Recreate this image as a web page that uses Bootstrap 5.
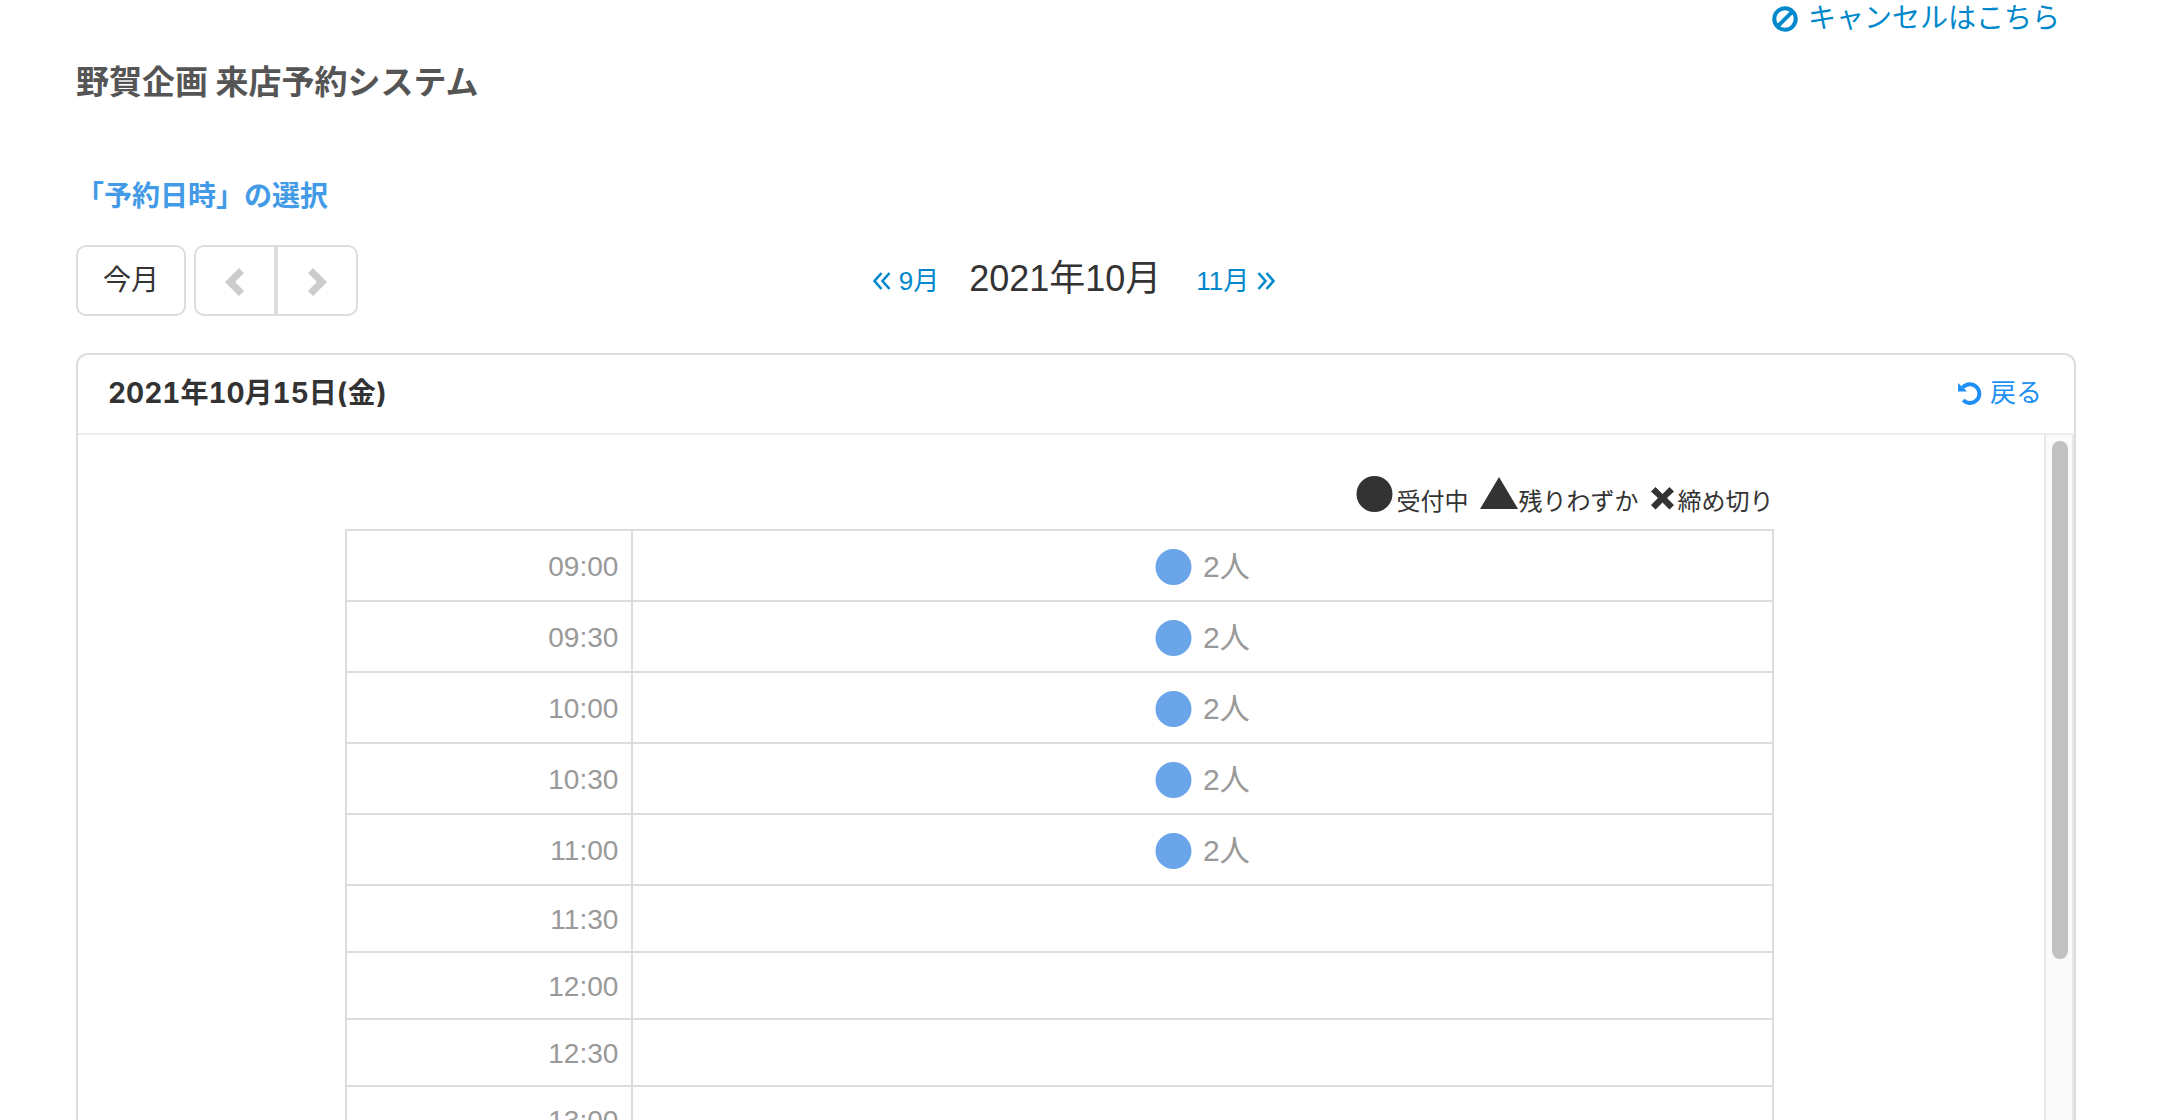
<!DOCTYPE html>
<html lang="ja">
<head>
<meta charset="utf-8">
<meta name="viewport" content="width=device-width, initial-scale=1">
<title>野賀企画 来店予約システム</title>
<link href="https://cdn.jsdelivr.net/npm/bootstrap@5.3.0/dist/css/bootstrap.min.css" rel="stylesheet">
<style>
  body { font-family: "Liberation Sans", "Noto Sans CJK JP", sans-serif; font-size: 28px; line-height: 36px; color: #333; }
  a { text-decoration: none; color: #08c; }
  svg { fill: currentColor; flex-shrink: 0; }
  .page { padding: 1px 84px 0 76px; }
  .page > *, .day-head { flex-shrink: 0; }
  .cancel-link { padding-right: 16px; gap: 10px; }
  .site-title { font-family: "Noto Sans CJK JP", sans-serif; font-size: 33px; line-height: 48px; font-weight: 700; color: #555; margin: 19px 0 0; }
  .step-title { font-size: 28px; line-height: 40px; font-weight: 700; color: #439ae6; margin: 73px 0 28px; }
  .toolbar-side { flex: 1 1 0; }
  .cal-btn { --bs-btn-font-size: 28px; --bs-btn-line-height: 36px; --bs-btn-color: #333; --bs-btn-border-color: #ddd; --bs-btn-border-width: 2px; --bs-btn-border-radius: 10px; --bs-btn-padding-x: 25px; --bs-btn-padding-y: 0px; height: 71px; border-width: 2px; }
  .cal-arrow { width: 82px; color: #ccc; }
  .cal-arrow + .cal-arrow { margin-left: 0 !important; }
  .month-link { font-size: 26px; }
  .month-name { font-size: 36px; line-height: 48px; font-weight: 400; margin: 0 35px 4px 30px; }
  .day-panel { border: 2px solid #ddd; border-bottom: 0; border-radius: 12px 12px 0 0; margin-top: 37px; min-height: 0; flex: 1 1 0; }
  .day-head { height: 80px; border-bottom: 2px solid #eee; padding: 0 32px 3px 30px; }
  .day-title { font-family: Inter, "Noto Sans CJK JP", sans-serif; font-variant-numeric: tabular-nums; font-size: 28px; line-height: 36px; font-weight: 700; margin: 0; }
  .back-link { font-size: 26px; color: #2190f5; }
  .slot-area { padding: 41px 4px 0 0; min-width: 0; }
  .slot-box { width: 1429px; max-width: 100%; }
  .legend-row { font-size: 24px; line-height: 36px; height: 53px; gap: 11px; }
  .slot-table { width: 100%; border-collapse: collapse; color: #999; }
  .slot-table th, .slot-table td { border: 2px solid #ddd; padding: 3px 13px 0; height: 67px; }
  .slot-table th { width: 20.1%; font-weight: 400; text-align: right; }
  .slot-table .open-row > * { height: 71px; }
  .slot-link { font-size: 30px; color: #999; gap: 11px; }
  .slot-link svg { color: #6aa5ea; }
  .scroll-track { width: 30px; background: #fafafa; border: solid #e8e8e8; border-width: 0 2px; padding: 6px; }
  .scroll-thumb { width: 16px; height: 77%; border-radius: 8px; background: #c1c1c1; }
</style>
</head>
<body>
<svg class="d-none" xmlns="http://www.w3.org/2000/svg">
  <symbol id="i-disc" viewBox="0 0 36 36"><circle cx="18" cy="18" r="18"/></symbol>
</svg>
<div class="page vh-100 overflow-hidden d-flex flex-column">
  <div class="d-flex justify-content-end">
    <a class="cancel-link d-flex align-items-center" href="#"><svg width="26" height="26" viewBox="0 0 26 26"><circle cx="13" cy="13" r="10.7" fill="none" stroke="currentColor" stroke-width="4"/><path d="M5.6 20.4 20.4 5.6" stroke="currentColor" stroke-width="4"/></svg>キャンセルはこちら</a>
  </div>
  <h1 class="site-title">野賀企画 来店予約システム</h1>
  <h2 class="step-title">「予約日時」の選択</h2>

  <div class="d-flex align-items-center">
    <div class="toolbar-side d-flex gap-2">
      <button type="button" class="btn cal-btn">今月</button>
      <div class="btn-group">
        <button type="button" class="btn cal-btn cal-arrow p-0" aria-label="前へ"><svg width="20" height="28" viewBox="0 0 20 28"><path d="M14 0 19 5 10.200 14 19 23 14 28 0 14z"/></svg></button>
        <button type="button" class="btn cal-btn cal-arrow p-0" aria-label="次へ"><svg width="20" height="28" viewBox="0 0 20 28"><path d="M6 0 1 5 9.800 14 1 23 6 28 20 14z"/></svg></button>
      </div>
    </div>
    <div class="d-flex align-items-center">
      <a class="month-link d-flex align-items-center" href="#"><svg class="me-2" width="18" height="18" viewBox="0 0 18 18"><path fill="none" d="M8.500 1 1.500 9l7 8M16.500 1l-7 8 7 8" stroke="currentColor" stroke-width="2.600"/></svg>9月</a>
      <h3 class="month-name">2021年10月</h3>
      <a class="month-link d-flex align-items-center" href="#">11月<svg class="ms-2" width="18" height="18" viewBox="0 0 18 18"><path fill="none" d="M1.500 1l7 8-7 8M9.500 1l7 8-7 8" stroke="currentColor" stroke-width="2.600"/></svg></a>
    </div>
    <div class="toolbar-side ms-1"></div>
  </div>

  <section class="day-panel d-flex flex-column">
    <div class="day-head d-flex align-items-center justify-content-between">
      <h3 class="day-title">2021年10月15日(金)</h3>
      <a class="back-link d-flex align-items-center" href="#"><svg class="me-2" width="24" height="24" viewBox="0 0 24 24"><path d="M4.800 6.500A9.400 9.400 0 1 1 5.200 19.200" fill="none" stroke="currentColor" stroke-width="4"/><path d="M0 2v8.500h9z"/></svg>戻る</a>
    </div>
    <div class="d-flex flex-grow-1 overflow-hidden">
      <div class="slot-area flex-grow-1">
        <div class="slot-box mx-auto">
          <div class="legend-row d-flex justify-content-end">
            <span class="d-flex"><svg class="me-1" width="37" height="36"><use href="#i-disc"/></svg><span class="pt-2">受付中</span></span>
            <span class="d-flex"><svg width="39" height="36" viewBox="0 0 39 36"><path d="M0 33 19 1 38 33z"/></svg><span class="pt-2">残りわずか</span></span>
            <span class="d-flex"><svg class="mt-2" width="28" height="28" viewBox="0 0 28 28"><path d="M1 7.500 5.500 3l7 7 7-7L24 7.500 17 14l7 7-4.500 4.500-7-7-7 7L1 21l7-7z"/></svg><span class="pt-2">締め切り</span></span>
          </div>
          <table class="slot-table">
            <tbody>
              <tr class="open-row"><th scope="row">09:00</th><td><a class="slot-link d-flex align-items-center justify-content-center" href="#"><svg width="37" height="36"><use href="#i-disc"/></svg>2人</a></td></tr>
              <tr class="open-row"><th scope="row">09:30</th><td><a class="slot-link d-flex align-items-center justify-content-center" href="#"><svg width="37" height="36"><use href="#i-disc"/></svg>2人</a></td></tr>
              <tr class="open-row"><th scope="row">10:00</th><td><a class="slot-link d-flex align-items-center justify-content-center" href="#"><svg width="37" height="36"><use href="#i-disc"/></svg>2人</a></td></tr>
              <tr class="open-row"><th scope="row">10:30</th><td><a class="slot-link d-flex align-items-center justify-content-center" href="#"><svg width="37" height="36"><use href="#i-disc"/></svg>2人</a></td></tr>
              <tr class="open-row"><th scope="row">11:00</th><td><a class="slot-link d-flex align-items-center justify-content-center" href="#"><svg width="37" height="36"><use href="#i-disc"/></svg>2人</a></td></tr>
              <tr><th scope="row">11:30</th><td></td></tr>
              <tr><th scope="row">12:00</th><td></td></tr>
              <tr><th scope="row">12:30</th><td></td></tr>
              <tr><th scope="row">13:00</th><td></td></tr>
            </tbody>
          </table>
        </div>
      </div>
      <div class="scroll-track flex-shrink-0"><div class="scroll-thumb"></div></div>
    </div>
  </section>
</div>
<script src="https://cdn.jsdelivr.net/npm/bootstrap@5.3.0/dist/js/bootstrap.bundle.min.js"></script>
</body>
</html>
